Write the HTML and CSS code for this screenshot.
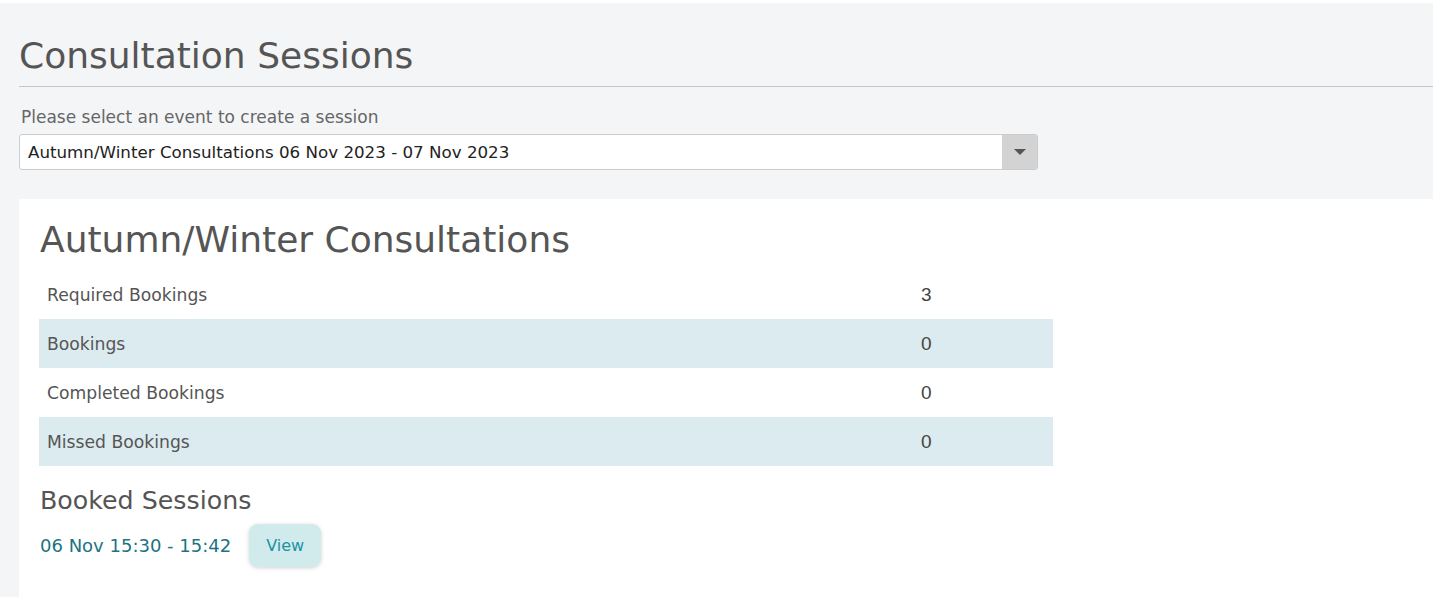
FILE: index.html
```html
<!DOCTYPE html>
<html lang="en">
<head>
  <meta charset="UTF-8">
  <title>Consultation Sessions</title>
  <link rel="stylesheet" href="styles.css">
</head>
<body>
<div class="page">
  <header class="page-head">
    <h1>Consultation Sessions</h1>
    <hr>
    <label class="field-label" for="event">Please select an event to create a session</label>
    <div class="select">
      <span class="select-value">Autumn/Winter Consultations 06 Nov 2023 - 07 Nov 2023</span>
      <span class="select-arrow"><i></i></span>
    </div>
  </header>

  <section class="event">
    <h2>Autumn/Winter Consultations</h2>
    <table class="stats">
      <tr><td>Required Bookings</td><td class="num">3</td></tr>
      <tr class="alt"><td>Bookings</td><td class="num">0</td></tr>
      <tr><td>Completed Bookings</td><td class="num">0</td></tr>
      <tr class="alt"><td>Missed Bookings</td><td class="num">0</td></tr>
    </table>

    <h3>Booked Sessions</h3>
    <div class="session">
      <a href="#" class="session-time">06 Nov 15:30 - 15:42</a>
      <button class="btn-view">View</button>
    </div>
  </section>
</div>
</body>
</html>
```

FILE: styles.css
```css
* {
  box-sizing: border-box;
}

html, body {
  margin: 0;
  padding: 0;
  height: 100%;
  background: #fff;
  font-family: "DejaVu Sans", sans-serif;
  color: #555;
  overflow: hidden;
}

.page {
  margin-top: 3px;
  min-height: 100%;
  background: #f4f5f7;
  padding-left: 19px;
}

.page-head {
  padding-bottom: 29px;
}

.page-head h1 {
  margin: 0;
  padding-top: 31px;
  font-size: 36px;
  line-height: 44px;
  font-weight: 400;
  color: #555;
}

.page-head hr {
  margin: 8px 0 0;
  border: 0;
  border-top: 1px solid #c6c7c9;
}

.field-label {
  display: block;
  margin: 18px 0 0 2px;
  font-size: 17px;
  line-height: 24px;
  color: #666;
}

.select {
  display: flex;
  width: 1019px;
  height: 36px;
  margin-top: 5px;
  background: #fff;
  border: 1px solid #ccc;
  border-radius: 3px;
  overflow: hidden;
}

.select-value {
  flex: 1;
  padding-left: 8px;
  font-size: 16.7px;
  line-height: 34px;
  color: #222;
}

.select-arrow {
  width: 35px;
  background: #d3d3d3;
  display: flex;
  align-items: center;
  justify-content: center;
}

.select-arrow i {
  width: 0;
  height: 0;
  border-left: 6px solid transparent;
  border-right: 6px solid transparent;
  border-top: 6px solid #555;
}

.event {
  background: #fff;
  padding: 18px 20px 40px 20px;
}

.event h2 {
  margin: 0 0 0 1px;
  font-size: 36px;
  line-height: 46px;
  font-weight: 400;
  color: #555;
}

.stats {
  width: 1014px;
  border-collapse: collapse;
  margin-top: 7px;
}

.stats td {
  height: 49px;
  padding: 0 8px;
  font-size: 17.2px;
  color: #555;
}

.stats tr.alt td {
  background: #dcebef;
}

.stats td.num {
  width: 132px;
  padding-left: 0;
  font-family: "Liberation Sans", Arial, sans-serif;
  font-size: 19px;
  color: #444;
}

.event h3 {
  margin: 19px 0 0 1px;
  font-size: 25.3px;
  line-height: 32px;
  font-weight: 400;
  color: #555;
}

.session {
  display: flex;
  align-items: center;
  gap: 18px;
  margin-top: 7px;
  padding-left: 1px;
}

.session-time {
  color: #1b7383;
  font-size: 18px;
  text-decoration: none;
}

.btn-view {
  width: 72px;
  height: 43px;
  border: 0;
  border-radius: 9px;
  background: #d1ebec;
  color: #1a93a3;
  font: 16px "DejaVu Sans", sans-serif;
  box-shadow: 0 1px 4px rgba(0, 0, 0, 0.18);
}
```
